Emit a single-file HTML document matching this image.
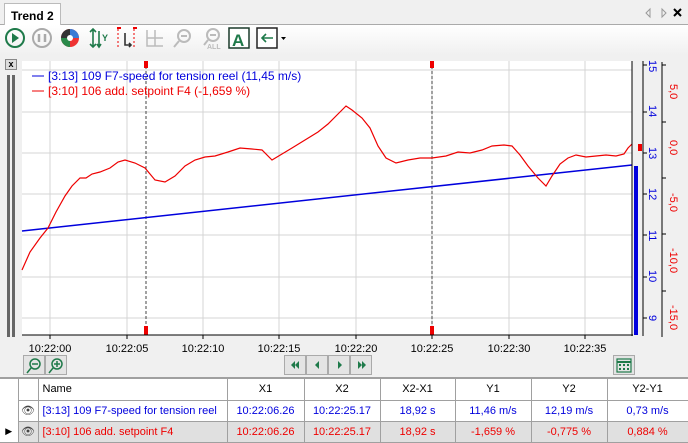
<!DOCTYPE html>
<html><head><style>
*{margin:0;padding:0;box-sizing:border-box}
body{width:688px;height:442px;background:#f0f0f0;font-family:"Liberation Sans",sans-serif;position:relative;overflow:hidden;font-size:12px}
.a{position:absolute}
.tab{left:4px;top:3px;width:57px;height:22px;background:#fff;border:1px solid #bbb;border-bottom:none;font-size:12px;font-weight:bold;padding:5px 0 0 6px;white-space:nowrap}
.btn{position:absolute;width:22px;height:20px;border:1px solid #aaa;background:#e4e4e4}
table{position:absolute;left:0;top:379px;width:688px;border-collapse:collapse;font-size:11px;table-layout:fixed}
td{height:21px;border-right:1px solid #a0a0a0;border-bottom:1px solid #a0a0a0;text-align:center;white-space:nowrap;overflow:hidden}
</style></head><body>
<div class="a" style="left:0;top:24px;width:688px;height:354px;background:#fff;border-top:1px solid #aaa"></div>
<div class="a" style="left:0;top:25px;width:688px;height:30px;background:linear-gradient(#fff,#f0f0f0)"></div>
<div class="a" style="left:0;top:55px;width:688px;height:323px;background:#f0f0f0"></div>
<div class="a tab">Trend 2</div>
<svg class="a" style="left:0;top:0" width="688" height="60">
<path d="M650 9l-4 4 4 4z M662 9l4 4-4 4z" fill="none" stroke="#999"/>
<path d="M674 9l7 7M681 9l-7 7" stroke="#000" stroke-width="2"/>
<circle cx="15" cy="38" r="9" fill="none" stroke="#1f7a4a" stroke-width="2"/><path d="M12 33l7 5-7 5z" fill="#1f7a4a"/>
<circle cx="42" cy="38" r="9" fill="none" stroke="#aaa" stroke-width="2"/><path d="M39 34v8M45 34v8" stroke="#aaa" stroke-width="2.5"/>
<circle cx="70" cy="38" r="9" fill="#e33"/><path d="M70 29a9 9 0 0 1 9 9h-9z" fill="#3a7bd5"/><path d="M70 47a9 9 0 0 1-9-9h9z" fill="#2a8a4a"/><path d="M61 38a9 9 0 0 1 9-9v9z" fill="#333"/><circle cx="70" cy="38" r="3" fill="#fff"/>
<path d="M93 29v18M90 32l3-3 3 3M90 44l3 3 3-3M99 31v16M97 44l2 3 2-3" stroke="#1f7a4a" stroke-width="1.6" fill="none"/><text x="102" y="41" font-size="9" font-weight="bold" fill="#1f7a4a">Y</text>
<path d="M118 29v20M134 29v20" stroke="#e00" stroke-dasharray="2 2"/><path d="M117 28h4M133 28h4" stroke="#e00" stroke-width="2"/><path d="M125 33v12h6M129 43l2 2-2 2" stroke="#333" stroke-width="1.6" fill="none"/>
<path d="M147 30v16h16M155 30v16M147 38h16" stroke="#bbb" stroke-width="1.5" fill="none"/>
<circle cx="184" cy="36" r="6" fill="none" stroke="#bbb" stroke-width="2"/><path d="M181 36h6M179 41l-5 6" stroke="#bbb" stroke-width="2"/>
<circle cx="213" cy="35" r="6" fill="none" stroke="#bbb" stroke-width="2"/><path d="M210 35h6M208 40l-4 5" stroke="#bbb" stroke-width="2"/><text x="207" y="49" font-size="7" font-weight="bold" fill="#bbb">ALL</text>
<rect x="229" y="28" width="20" height="20" fill="#fff" stroke="#1a3a2a" stroke-width="1.5"/><text x="232" y="46" font-size="17" font-weight="bold" fill="#1f7a4a">A</text>
<rect x="257" y="28" width="20" height="20" fill="#fff" stroke="#222" stroke-width="1.5"/><path d="M273 38h-11M266 34l-4 4 4 4" stroke="#1f7a4a" stroke-width="1.6" fill="none"/><path d="M281 37h5l-2.5 3z" fill="#000"/>
</svg>
<div class="a" style="left:5px;top:59px;width:12px;height:11px;border:1px solid #888;background:#ddd;font-size:9px;font-weight:bold;text-align:center;line-height:9px">x</div>
<div class="a" style="left:7px;top:75px;width:3px;height:262px;background:#666"></div>
<div class="a" style="left:12px;top:75px;width:3px;height:262px;background:#666"></div>
<svg class="a" style="left:0;top:0" width="688" height="380">
<rect x="22" y="61" width="610" height="274" fill="#fff"/>
<g stroke="#d4d4d4">
<path d="M50 61v274M127 61v274M203 61v274M279 61v274M356 61v274M432 61v274M509 61v274M585 61v274"/>
<path d="M22 70h610M22 112h610M22 153h610M22 194h610M22 235h610M22 277h610M22 318h610"/>
</g>
<path d="M146 61v274M432 61v274" stroke="#444" stroke-dasharray="3 2"/>
<rect x="144" y="61" width="4" height="7" fill="#e00"/><rect x="430" y="61" width="4" height="7" fill="#e00"/>
<rect x="144" y="326" width="4" height="9" fill="#e00"/><rect x="430" y="326" width="4" height="9" fill="#e00"/>
<path d="M22 231L632 165" stroke="#00d" stroke-width="1.5"/>
<polyline fill="none" stroke="#e00" stroke-width="1.2" points="22,270 30,252 40,238 48,228 56,212 65,196 72,186 80,178 86,178 92,174 100,172 110,168 118,162 125,160 135,163 145,168 155,180 165,182 175,176 185,166 195,160 205,157 215,156 228,152 240,148 252,149 262,150 272,160 282,154 292,148 305,140 318,132 328,124 338,114 346,106 352,110 362,118 370,128 378,146 386,158 396,163 408,160 420,158 432,158 446,156 458,152 470,153 482,150 492,146 504,145 512,146 520,155 528,166 538,178 546,186 552,176 560,164 568,158 576,155 586,157 596,156 606,155 616,156 624,154 628,148 632,144"/>
<path d="M22 335h611M632 61v275" stroke="#000"/>
<path d="M50 335v4M127 335v4M203 335v4M279 335v4M356 335v4M432 335v4M509 335v4M585 335v4" stroke="#000"/>
<path d="M32 76h12" stroke="#00d"/><path d="M32 91h12" stroke="#e00"/>
<text x="48" y="80" fill="#00d" font-size="12">[3:13] 109 F7-speed for tension reel (11,45 m/s)</text>
<text x="48" y="95" fill="#e00" font-size="12">[3:10] 106 add. setpoint F4 (-1,659 %)</text>
<rect x="634" y="166" width="4" height="169" fill="#00d"/>
<rect x="638" y="144" width="4" height="7" fill="#e00"/>
<path d="M643 61v275M662 62v275" stroke="#000"/>
<g stroke="#000"><path d="M643 65h4M643 112h4M643 153h4M643 194h4M643 235h4M643 277h4M643 318h4M662 65h4M662 122h4M662 178h4M662 234h4M662 291h4"/></g>
<g fill="#00d" font-size="11">
<text transform="translate(649,60) rotate(90)">15</text><text transform="translate(649,105) rotate(90)">14</text><text transform="translate(649,147) rotate(90)">13</text><text transform="translate(649,188) rotate(90)">12</text><text transform="translate(649,230) rotate(90)">11</text><text transform="translate(649,270) rotate(90)">10</text><text transform="translate(649,315) rotate(90)">9</text>
</g>
<g fill="#e00" font-size="11">
<text transform="translate(670,84) rotate(90)">5,0</text><text transform="translate(670,140) rotate(90)">0,0</text><text transform="translate(670,193) rotate(90)">-5,0</text><text transform="translate(670,248) rotate(90)">-10,0</text><text transform="translate(670,305) rotate(90)">-15,0</text>
</g>
<g font-size="11" fill="#000" text-anchor="middle">
<text x="50" y="352">10:22:00</text><text x="127" y="352">10:22:05</text><text x="203" y="352">10:22:10</text><text x="279" y="352">10:22:15</text><text x="356" y="352">10:22:20</text><text x="432" y="352">10:22:25</text><text x="509" y="352">10:22:30</text><text x="585" y="352">10:22:35</text>
</g>
</svg>
<div class="btn" style="left:23px;top:355px"></div><div class="btn" style="left:45px;top:355px"></div>
<div class="btn" style="left:284px;top:355px"></div><div class="btn" style="left:306px;top:355px"></div><div class="btn" style="left:328px;top:355px"></div><div class="btn" style="left:350px;top:355px"></div>
<div class="btn" style="left:613px;top:355px"></div>
<svg class="a" style="left:0;top:355px" width="688" height="22">
<g stroke="#1f7a4a" stroke-width="1.5" fill="none"><circle cx="35" cy="9" r="5"/><path d="M32 9h6M31 13l-4 5"/><circle cx="57" cy="9" r="5"/><path d="M54 9h6M57 6v6M53 13l-4 5"/></g>
<g fill="#1f7a4a"><path d="M295 6l-4 4 4 4zM299 6l-4 4 4 4zM319 6l-4 4 4 4zM338 6l4 4-4 4zM358 6l4 4-4 4zM362 6l4 4-4 4z"/></g>
<rect x="617" y="4" width="14" height="13" fill="none" stroke="#1f7a4a" stroke-width="1.2"/><path d="M617 7h14" stroke="#1f7a4a" stroke-width="2"/>
<g fill="#1f7a4a"><rect x="619" y="9" width="2" height="2"/><rect x="623" y="9" width="2" height="2"/><rect x="627" y="9" width="2" height="2"/><rect x="619" y="13" width="2" height="2"/><rect x="623" y="13" width="2" height="2"/><rect x="627" y="13" width="2" height="2"/></g>
</svg>
<div class="a" style="left:0;top:377px;width:688px;height:2px;background:#a0a0a0"></div>
<table>
<colgroup><col style="width:18px"><col style="width:20px"><col style="width:189px"><col style="width:77px"><col style="width:76px"><col style="width:75px"><col style="width:76px"><col style="width:76px"><col style="width:81px"></colgroup>
<tr style="background:#fff"><td style="background:#fff;border-bottom:none"></td><td></td><td style="text-align:left;padding-left:4px">Name</td><td>X1</td><td>X2</td><td>X2-X1</td><td>Y1</td><td>Y2</td><td>Y2-Y1</td></tr>
<tr style="color:#00d;background:#fff"><td style="border-bottom:none"></td><td style="color:#444">👁</td><td style="text-align:left;padding-left:4px">[3:13] 109 F7-speed for tension reel</td><td>10:22:06.26</td><td>10:22:25.17</td><td>18,92 s</td><td>11,46 m/s</td><td>12,19 m/s</td><td>0,73 m/s</td></tr>
<tr style="color:#e00;background:#e0e0e0"><td style="background:#fff;color:#000;font-size:9px">▶</td><td style="color:#444">👁</td><td style="text-align:left;padding-left:4px">[3:10] 106 add. setpoint F4</td><td>10:22:06.26</td><td>10:22:25.17</td><td>18,92 s</td><td>-1,659 %</td><td>-0,775 %</td><td>0,884 %</td></tr>
</table>
</body></html>
